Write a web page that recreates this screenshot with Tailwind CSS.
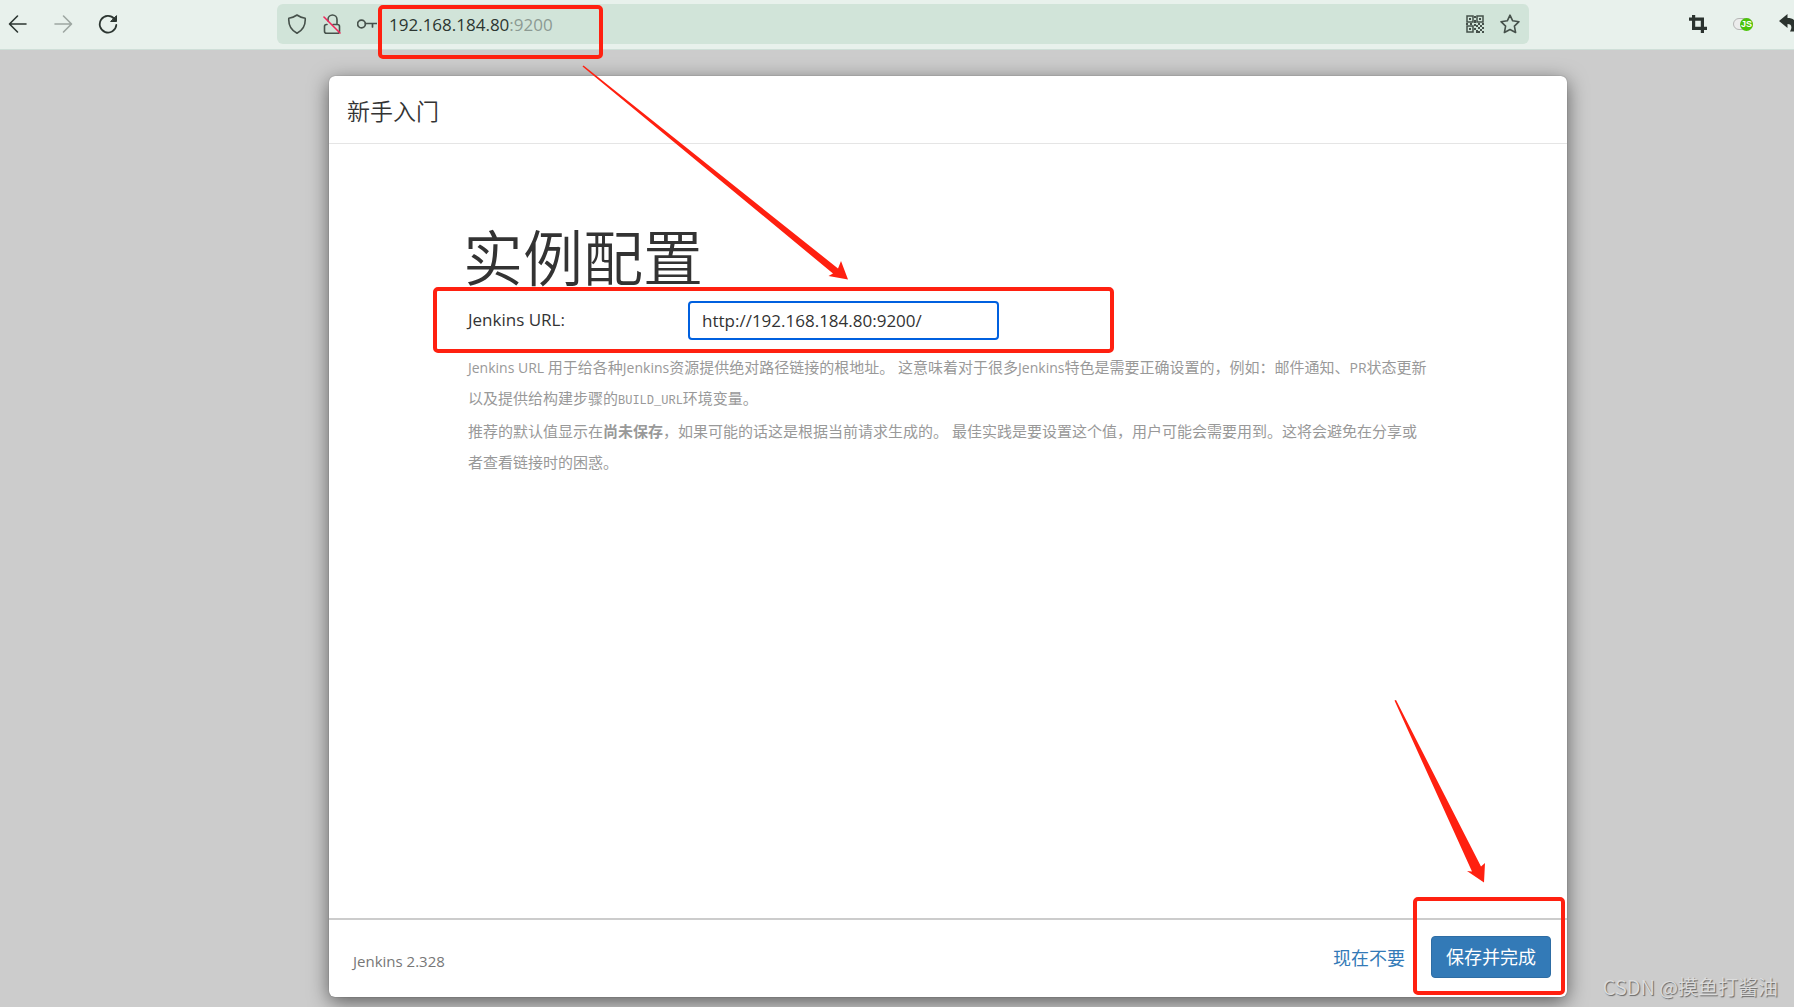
<!DOCTYPE html>
<html lang="zh-CN">
<head>
<meta charset="utf-8">
<title>新手入门 - Jenkins</title>
<script src="https://cdn.jsdelivr.net/npm/@tailwindcss/browser@4"></script>
</head>
<body class="relative flex h-screen flex-col overflow-hidden bg-[#cccccc] font-['Open_Sans','Noto_Sans_CJK_SC',sans-serif] text-[#333333]">

<!-- browser toolbar -->
<header class="flex h-[50px] shrink-0 items-start overflow-hidden border-b border-[#cfdfd8] bg-[#e8f1ec] pt-1 text-[#2c3631]">
  <nav class="flex h-10 w-[277px] shrink-0 items-center gap-[25px] pl-2">
    <button aria-label="后退"><svg class="size-5" viewBox="0 0 20 20" fill="none" stroke="currentColor" stroke-width="1.6" stroke-linecap="round" stroke-linejoin="round"><path d="M18 10H2M9.500 2L1.500 10l8 8"/></svg></button>
    <button aria-label="前进" class="text-[#9da6a1]"><svg class="size-5" viewBox="0 0 20 20" fill="none" stroke="currentColor" stroke-width="1.600" stroke-linecap="round" stroke-linejoin="round"><path d="M2 10h16M10.500 2l8 8-8 8"/></svg></button>
    <button aria-label="刷新"><svg class="size-5" viewBox="0 0 20 20" fill="none" stroke="currentColor" stroke-width="1.800" stroke-linecap="round" stroke-linejoin="round"><path d="M16.300 4.800A8.300 8.300 0 1 0 18.300 11"/><path d="M18.500 2v5.500H13z" fill="currentColor" stroke-width="1"/></svg></button>
  </nav>
  <div class="flex h-10 min-w-0 flex-1 items-center rounded-md bg-[#d1e4d9] pr-[9px] pl-[10px] text-[#46514b]">
    <div class="flex shrink-0 items-center gap-[15px]">
      <svg class="size-5" viewBox="0 0 20 20" fill="none" stroke="currentColor" stroke-width="1.600" stroke-linejoin="round"><path d="M10 1Q13.500 3.500 18.200 4.200C18.700 11 15.500 16.500 10 19.300 4.500 16.500 1.300 11 1.800 4.200Q6.500 3.500 10 1z"/></svg>
      <svg class="size-5" viewBox="0 0 20 20" fill="none" stroke="currentColor" stroke-width="1.600" stroke-linecap="round" stroke-linejoin="round"><path d="M6 7V5.500a4.500 4.500 0 0 1 9 0V10M5 10.500h-.5A2 2 0 0 0 2.500 12.500v4.700a2 2 0 0 0 2 2h11a2 2 0 0 0 2-2v-4.700a2 2 0 0 0-2-2H11"/><path d="M2 3l16 16" stroke="#f0245a"/></svg>
      <svg class="size-5" viewBox="0 0 20 20" fill="none" stroke="currentColor" stroke-width="1.700" stroke-linecap="round"><circle cx="4.500" cy="10" r="3.900"/><path d="M8.500 9.500H20M15.500 9.500v3.500"/></svg>
    </div>
    <p class="min-w-0 flex-1 pt-px pl-[12px] text-[17px] text-[#2c3631]">192.168.184.80<span class="text-[#8c9a93]">:9200</span></p>
    <div class="flex shrink-0 items-center gap-4">
      <button aria-label="二维码"><svg class="size-[18px]" viewBox="0 0 18 18" fill="none" stroke="currentColor" stroke-width="1.500"><path d="M1 1h6v6H1zM11 1h6v6h-6zM1 11h6v6H1z"/><path fill="currentColor" stroke="none" d="M3 3h2v2H3zM13 3h2v2h-2zM3 13h2v2H3zM8 1h2v2H8zM8 5h2v3H8zM0 8h2v2H0zM4 8h2v2H4zM8 9h2v2H8zM12 8h2v2h-2zM16 8h2v2h-2zM10 10h2v2h-2zM14 10h2v2h-2zM8 13h2v2H8zM12 12h2v2h-2zM16 12h2v2h-2zM10 15h2v3h-2zM14 14h2v2h-2zM12 16h2v2h-2zM16 16h2v2h-2z"/></svg></button>
      <button aria-label="收藏"><svg class="size-5" viewBox="0 0 20 20" fill="none" stroke="currentColor" stroke-width="1.600" stroke-linejoin="round"><path d="M10 1.200l2.700 5.600 6.300.9-4.600 4.400 1.200 6.400L10 15.500l-5.600 3 1.200-6.400L1 7.700l6.300-.9z"/></svg></button>
    </div>
  </div>
  <div class="flex h-10 w-[265px] shrink-0 items-center pl-[160px] text-[#2b332f]">
    <button aria-label="截图" class="shrink-0"><svg class="size-[18px]" viewBox="0 0 18 18" fill="none" stroke="currentColor" stroke-width="3.200"><path d="M4.600 0v13.400H18M0 4.200h13.400V18"/></svg></button>
    <button aria-label="JavaScript 开关" class="ml-[26px] flex h-3 w-5 shrink-0 items-center justify-end rounded-full border border-[#b5b5b5] bg-[#ececec]"><span class="-mr-px flex size-[13px] shrink-0 items-center justify-center rounded-full bg-[#4cc40a] font-['Liberation_Sans',sans-serif] text-[9px] leading-none font-bold text-white">JS</span></button>
    <button aria-label="撤销" class="ml-[26px] shrink-0"><svg class="size-5" viewBox="0 0 20 20" fill="currentColor"><path d="M0 7l8.500-7v4C16 4 19.500 9 16 17.500h-5C13.500 13 12.500 10 8.500 10v4z"/></svg></button>
  </div>
</header>

<!-- setup wizard dialog -->
<main class="mt-[26px] mr-[227px] mb-[10px] ml-[329px] flex min-h-0 flex-1 flex-col rounded-md bg-white shadow-[0_5px_20px_rgba(0,0,0,0.55),0_0_1px_rgba(0,0,0,0.5)]">
  <div class="flex h-[68px] shrink-0 items-center border-b border-[#e5e5e5] px-[18px] pt-[2px]">
    <h4 class="text-[23px] leading-8 font-[350]">新手入门</h4>
  </div>
  <form class="flex flex-1 flex-col pt-[78px] pr-[136px] pl-[134px]">
    <h1 class="text-[60px] leading-[72px] font-[350]">实例配置</h1>
    <div class="mt-[7px] flex items-center pl-[5px]">
      <label for="root-url" class="w-[220px] pb-[2px] text-[17px]">Jenkins URL:</label>
      <input id="root-url" type="text" value="http://192.168.184.80:9200/" class="h-[39px] w-[311px] rounded-[4px] border-2 border-[#0060df] bg-white px-3 text-[17px] outline-none">
    </div>
    <div class="mt-[12px] pl-[5px] text-[15px] leading-[31px] text-[#999999]">
      <p><span class="text-[14px]">Jenkins URL </span>用于给各种<span class="text-[14px]">Jenkins</span>资源提供绝对路径链接的根地址。 这意味着对于很多<span class="text-[14px]">Jenkins</span>特色是需要正确设置的，例如：邮件通知、<span class="text-[14px]">PR</span>状态更新以及提供给构建步骤的<code class="font-['Liberation_Mono',monospace] text-[12px] leading-none">BUILD_URL</code>环境变量。</p>
      <p class="mt-[2px]">推荐的默认值显示在<strong class="font-bold">尚未保存</strong>，如果可能的话这是根据当前请求生成的。 最佳实践是要设置这个值，用户可能会需要用到。这将会避免在分享或者查看链接时的困惑。</p>
    </div>
  </form>
  <footer class="flex h-[79px] shrink-0 items-center border-t-2 border-[#cccccc] pr-4 pl-6">
    <p class="flex-1 pt-[6px] text-[15px] text-[#777777]">Jenkins 2.328</p>
    <a href="#" class="mr-[26px] text-[18px] text-[#337ab7]">现在不要</a>
    <button class="mb-[3px] h-[42px] w-[120px] rounded-[4px] border border-[#2e6da4] bg-[#337ab7] text-[18px] text-white">保存并完成</button>
  </footer>
</main>

<!-- tutorial annotations -->
<svg class="pointer-events-none absolute top-0 left-0 h-[1007px] w-[1794px]" viewBox="0 0 1794 1007" fill="none" stroke="#ff2010" stroke-width="4">
  <rect x="380" y="7" width="221" height="50" rx="3"/>
  <rect x="435" y="289" width="677" height="62" rx="3"/>
  <rect x="1415" y="899" width="148" height="94" rx="3"/>
  <path fill="#ff2010" stroke="none" d="M582.500 66.500L583.500 65.500 838 268.500 841 261 848 279.500 828.500 276 833 273.500z"/>
  <path fill="#ff2010" stroke="none" d="M1394.500 700.500L1396 700 1481 866.500 1485 863 1484 882.500 1467 871 1472 871.500z"/>
</svg>
<p class="absolute right-4 bottom-[5px] font-['Noto_Sans_CJK_SC',sans-serif] text-[20px] leading-[30px] font-[350] text-[#dcdcdc] [text-shadow:1px_1px_1px_#666666]">CSDN @摸鱼打酱油</p>
</body>
</html>
